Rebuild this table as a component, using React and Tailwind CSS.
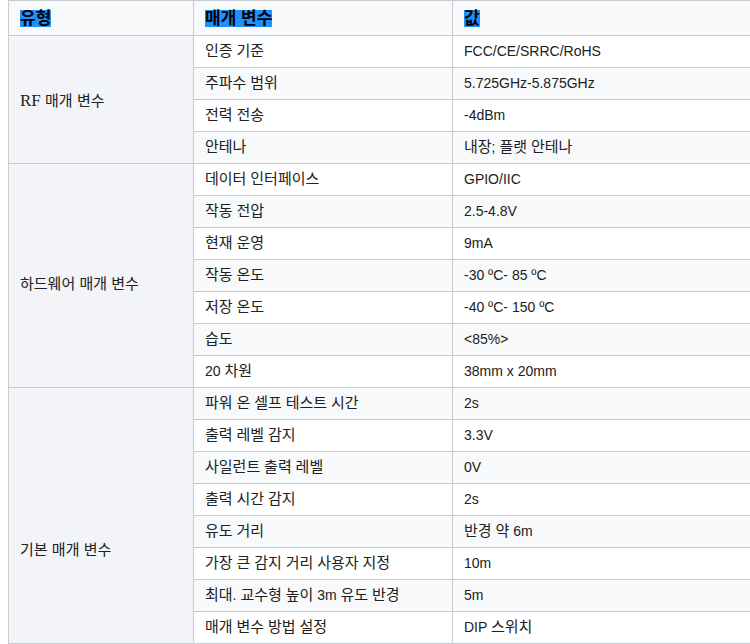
import React from 'react';

const groups = [
  {
    type: 'RF 매개 변수',
    pad: 'pt-[2px]',
    rows: [
      ['인증 기준', 'FCC/CE/SRRC/RoHS'],
      ['주파수 범위', '5.725GHz-5.875GHz'],
      ['전력 전송', '-4dBm'],
      ['안테나', '내장; 플랫 안테나'],
    ],
  },
  {
    type: '하드웨어 매개 변수',
    pad: 'pt-[16px]',
    rows: [
      ['데이터 인터페이스', 'GPIO/IIC'],
      ['작동 전압', '2.5-4.8V'],
      ['현재 운영', '9mA'],
      ['작동 온도', '-30 ºC- 85 ºC'],
      ['저장 온도', '-40 ºC- 150 ºC'],
      ['습도', '<85%>'],
      ['20 차원', '38mm x 20mm'],
    ],
  },
  {
    type: '기본 매개 변수',
    pad: 'pt-[68px]',
    rows: [
      ['파워 온 셀프 테스트 시간', '2s'],
      ['출력 레벨 감지', '3.3V'],
      ['사일런트 출력 레벨', '0V'],
      ['출력 시간 감지', '2s'],
      ['유도 거리', '반경 약 6m'],
      ['가장 큰 감지 거리 사용자 지정', '10m'],
      ['최대. 교수형 높이 3m 유도 반경', '5m'],
      ['매개 변수 방법 설정', 'DIP 스위치'],
    ],
  },
];

const kr = "font-['Liberation_Sans','Noto_Sans_CJK_KR',sans-serif]";

// hangul in the fallback font runs narrower than the original, so bump it a bit
function Mixed({ text }) {
  const parts = text.split(/([가-힣]+)/);
  return parts.map((p, i) =>
    /[가-힣]/.test(p) ? (
      <span key={i} className="text-[15px]">{p}</span>
    ) : (
      p
    )
  );
}

export default function App() {
  let idx = 0;
  return (
    <div className="w-[750px] h-[644px] overflow-hidden bg-white">
      <div className="pl-2">
        <table className="w-[780px] border-collapse text-[14px] text-[#202122] table-fixed">
          <colgroup>
            <col className="w-[185px]" />
            <col className="w-[259px]" />
            <col />
          </colgroup>
          <thead>
            <tr className="h-[35px] bg-[#f8f9fa]">
              {['유형', '매개 변수', '값'].map((h) => (
                <th key={h} className={`border border-[#c8ccd1] px-[11px] text-left align-middle font-bold ${kr}`}>
                  <span className="inline-block h-[17px] bg-[#1e90ff] align-middle text-[17px] leading-[17px] text-black">{h}</span>
                </th>
              ))}
            </tr>
          </thead>
          <tbody>
            {groups.map((g) =>
              g.rows.map((r, i) => {
                idx += 1;
                const stripe = idx % 2 === 0 ? 'bg-[#f8f9fa]' : 'bg-white';
                return (
                  <tr key={r[0]} className={`h-[32px] ${stripe}`}>
                    {i === 0 && (
                      <td
                        rowSpan={g.rows.length}
                        className={`border border-[#c8ccd1] bg-[#f3f4f7] px-[11px] pb-0 align-middle text-[17px] font-['Liberation_Serif','Noto_Sans_CJK_KR',serif] ${g.pad}`}
                      >
                        <Mixed text={g.type} />
                      </td>
                    )}
                    <td className={`border border-[#c8ccd1] px-[11px] align-middle whitespace-nowrap ${kr}`}>
                      <Mixed text={r[0]} />
                    </td>
                    <td className={`border border-[#c8ccd1] px-[11px] align-middle whitespace-nowrap ${kr}`}>
                      <Mixed text={r[1]} />
                    </td>
                  </tr>
                );
              })
            )}
          </tbody>
        </table>
      </div>
    </div>
  );
}
